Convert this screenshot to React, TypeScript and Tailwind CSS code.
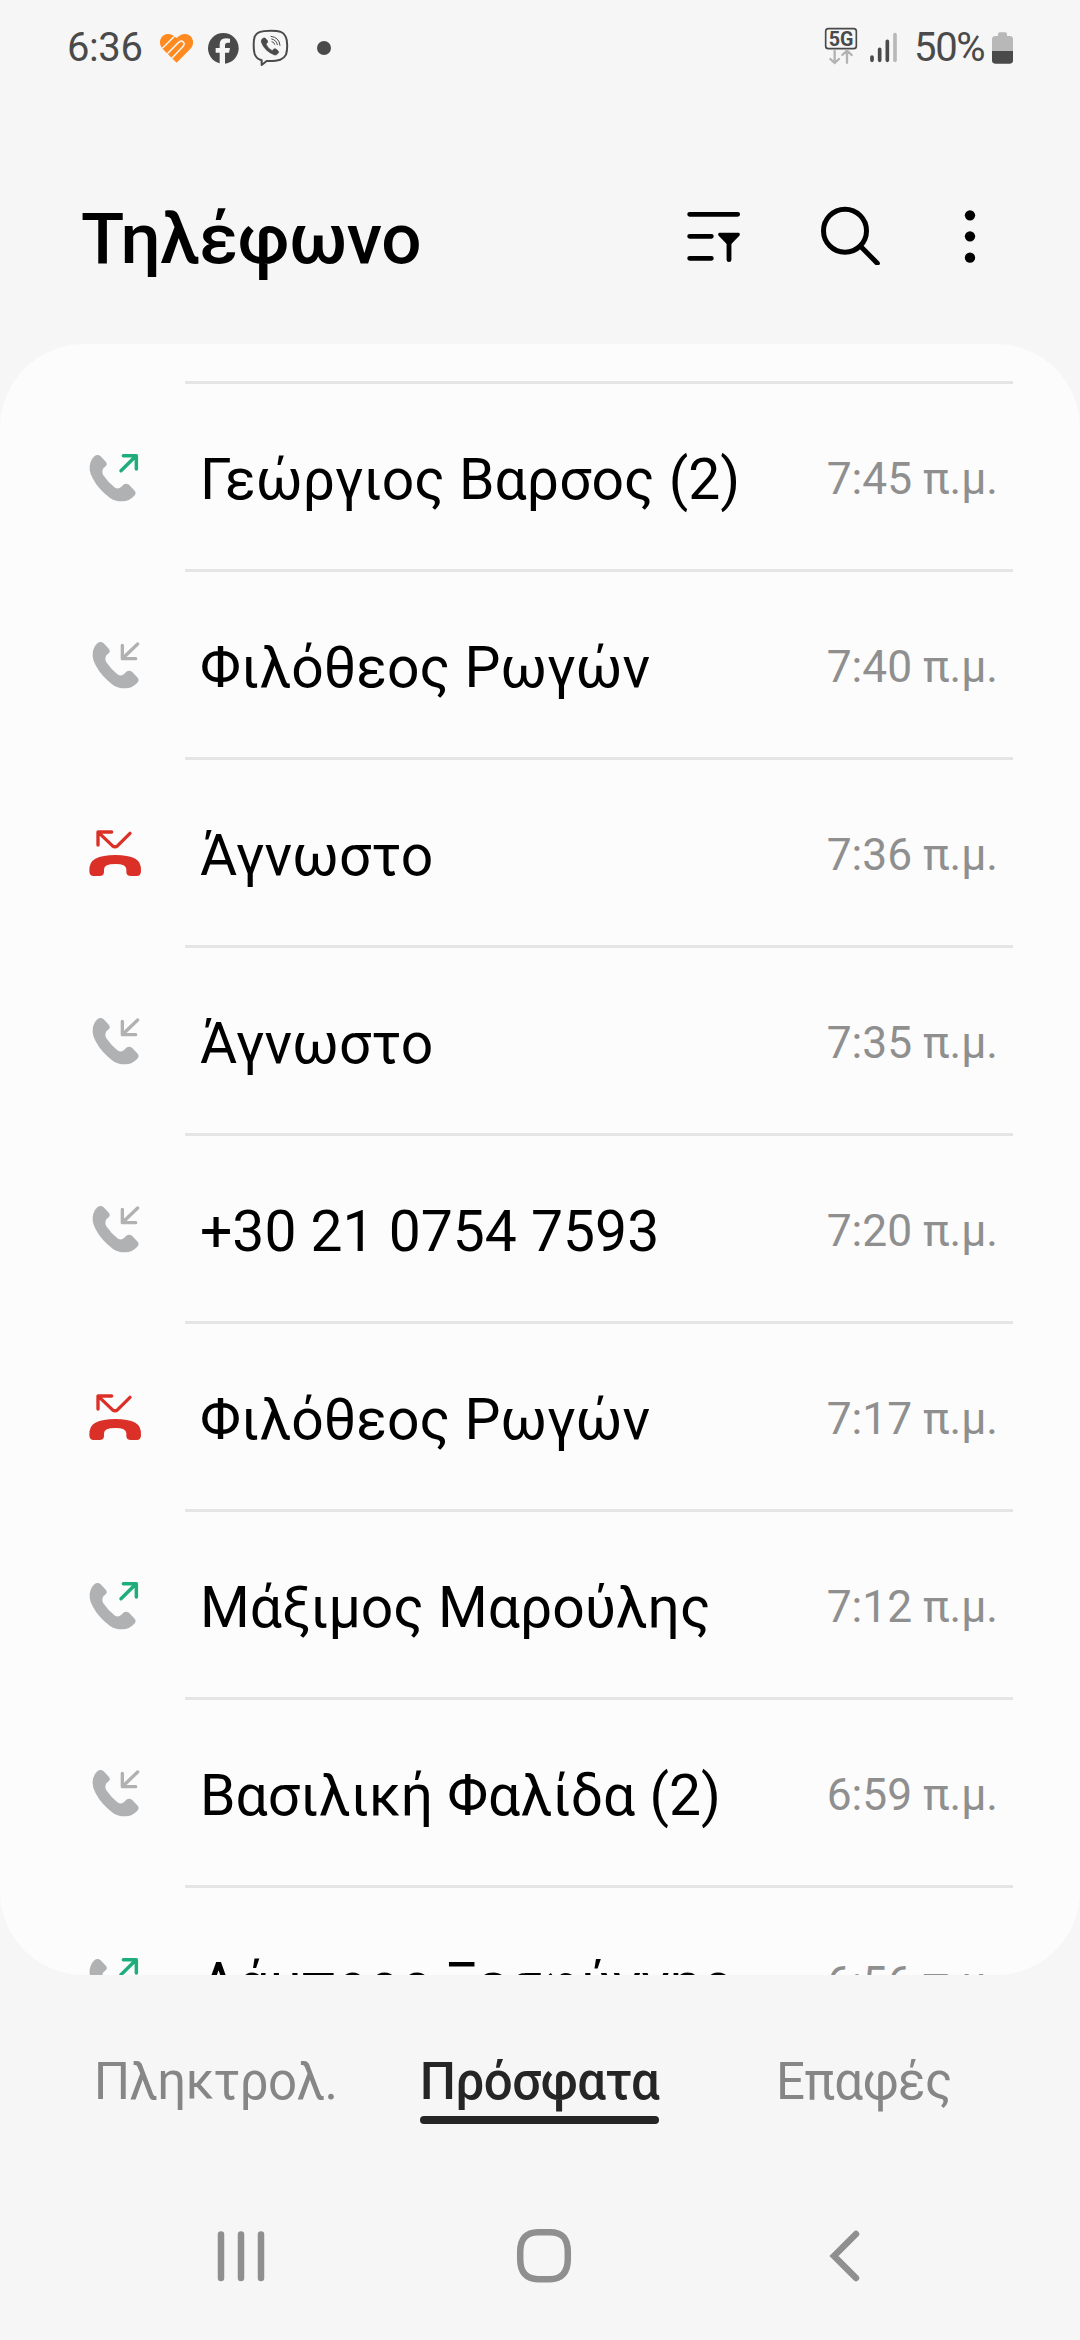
import React, { useState } from 'react';

type CallType = 'outgoing' | 'incoming' | 'missed';

interface CallEntry {
  id: number;
  type: CallType;
  name: string;
  time: string;
}

const calls: CallEntry[] = [
  { id: 1, type: 'outgoing', name: 'Γεώργιος Βαρσος (2)', time: '7:45 π.μ.' },
  { id: 2, type: 'incoming', name: 'Φιλόθεος Ρωγών', time: '7:40 π.μ.' },
  { id: 3, type: 'missed', name: 'Άγνωστο', time: '7:36 π.μ.' },
  { id: 4, type: 'incoming', name: 'Άγνωστο', time: '7:35 π.μ.' },
  { id: 5, type: 'incoming', name: '+30 21 0754 7593', time: '7:20 π.μ.' },
  { id: 6, type: 'missed', name: 'Φιλόθεος Ρωγών', time: '7:17 π.μ.' },
  { id: 7, type: 'outgoing', name: 'Μάξιμος Μαρούλης', time: '7:12 π.μ.' },
  { id: 8, type: 'incoming', name: 'Βασιλική Φαλίδα (2)', time: '6:59 π.μ.' },
  { id: 9, type: 'outgoing', name: 'Λάμπρος Ξεσφύγγης', time: '6:56 π.μ.' },
];

const HANDSET =
  'M103 109 Q113 101 122 109 L138 126 Q143 132 138 138 L130 145 Q124 155 130 166 Q143 186 165 203 Q176 209 184 200 L190 194 Q198 189 207 194 L224 212 Q230 219 223 227 Q207 244 188 244 Q166 245 150 234 Q115 208 98 175 Q84 150 91 128 Q95 116 103 109Z';

const CallIcon: React.FC<{ type: CallType }> = ({ type }) => {
  if (type === 'missed') {
    return (
      <svg viewBox="72 66 180 183" className="h-[61px] w-[60px]" fill="none">
        <path
          d="M155 96 H114 V135 M116 98 L157 137 Q165 144 173 137 L210 100"
          stroke="#db3028"
          strokeWidth="10"
          strokeLinecap="round"
          strokeLinejoin="round"
        />
        <path
          d="M88 213 Q87 185 106 176 Q128 165 166 165 Q204 165 226 176 Q244 185 243 213 Q243 228 230 228 H213 Q199 228 199 216 V208 Q199 192 166 192 Q132 192 132 208 V216 Q132 228 118 228 H101 Q88 228 88 213Z"
          fill="#db3028"
        />
      </svg>
    );
  }

  if (type === 'incoming') {
    return (
      <svg viewBox="72 72 180 183" className="h-[61px] w-[60px]" fill="none">
        <path d={HANDSET} transform="translate(9 -9)" fill="#b0b1b3" />
        <path
          d="M187 106 V146 H227 M189 144 L233 102"
          stroke="#b0b1b3"
          strokeWidth="10"
          strokeLinecap="round"
          strokeLinejoin="round"
        />
      </svg>
    );
  }

  return (
    <svg viewBox="72 78 180 183" className="h-[61px] w-[60px]" fill="none">
      <path d={HANDSET} fill="#b0b1b3" />
      <path
        d="M190 107 H229 V147 M183 152 L227 109"
        stroke="#1fae7b"
        strokeWidth="10.5"
        strokeLinecap="round"
        strokeLinejoin="round"
      />
    </svg>
  );
};

const StatusBar: React.FC = () => (
  <div className="flex h-[94px] items-center justify-between pr-[66px] pl-[67px] text-[#4a4a4a]">
    <div className="flex items-center">
      <span className="w-[91px] pt-0.5 text-[40px] leading-none tracking-[-0.4px]">6:36</span>
      <svg viewBox="324 51 108 120" className="h-10 w-9">
        <clipPath id="heart">
          <path d="M380 158 L338 117 C326 104 328 86 339 77 C351 69 366 71 380 84 C394 70 410 69 422 79 C432 91 432 106 420 118Z" />
        </clipPath>
        <g clipPath="url(#heart)">
          <rect x="324" y="60" width="108" height="110" fill="#ff8a1f" />
          <path d="M334 118 L375 77" stroke="#f6f6f6" strokeWidth="4.5" />
          <path d="M349 134 L385 98 Q394 90 400 96 Q406 102 397 112 L364 146" stroke="#f6f6f6" strokeWidth="4.5" fill="none" />
        </g>
      </svg>
      <svg viewBox="471 51 99 120" className="ml-[13px] h-10 w-[33px]">
        <circle cx="520" cy="115" r="46" fill="#4a4a4a" />
        <path
          d="M509 162 V128 H497 V114 H509 V104 Q509 85 528 85 Q535 85 540 86 V98 H533 Q525 98 525 106 V114 H540 L537 128 H525 V162Z"
          fill="#f6f6f6"
        />
      </svg>
      <svg viewBox="606 51 114 120" className="ml-3 h-10 w-[38px]" fill="none" stroke="#4a4a4a">
        <path
          d="M662 62 C630 62 620 68 614 80 C610 92 610 120 614 132 C618 143 624 148 635 151 V165 L650 153 C688 154 701 148 708 134 C713 118 713 92 707 80 C700 66 690 62 662 62Z"
          strokeWidth="6"
          strokeLinejoin="round"
        />
        <path
          d="M641 84 Q632 88 634 96 Q643 123 674 135 Q681 137 686 127 Q687 123 676 116 Q671 115 667 122 Q653 116 648 102 L653 97 Q655 93 645 84Z"
          fill="#4a4a4a"
          strokeWidth="2"
        />
        <path d="M663 79 Q688 82 690 106 M665 87 Q680 90 682 104 M666 95 Q673 96 674 103" strokeWidth="3" strokeLinecap="round" />
      </svg>
      <svg viewBox="792 51 60 120" className="ml-6 h-10 w-5">
        <circle cx="822" cy="114" r="21" fill="#4a4a4a" />
      </svg>
    </div>

    <div className="flex items-center">
      <svg viewBox="72 51 102 120" className="h-10 w-[34px]" fill="none">
        <rect x="77" y="56" width="92" height="60" rx="8" stroke="#4a4a4a" strokeWidth="5" />
        <text x="123" y="107" textAnchor="middle" fontFamily="Roboto, sans-serif" fontWeight="700" fontSize="59" fill="#4a4a4a">
          5G
        </text>
        <path
          d="M104 123 V158 M91 147 L104 159 L117 147 M141 158 V124 M127 135 L141 122 L155 135"
          stroke="#b3b3b3"
          strokeWidth="7"
          strokeLinecap="round"
        />
      </svg>
      <svg viewBox="204 51 90 120" className="ml-2.5 h-10 w-[30px]" strokeWidth="11" strokeLinecap="round" stroke="#4a4a4a">
        <path d="M216 141 V151 M239 118 V151 M262 94 V151" />
        <path d="M285 74 V151" stroke="#b8b8b8" />
      </svg>
      <span className="ml-4 w-[77px] pt-0.5 text-[40px] leading-none tracking-[-1.3px]">50%</span>
      <svg viewBox="573 51 69 120" className="h-10 w-[23px]">
        <path d="M594 73 Q594 67 600 67 H615 Q621 67 621 73 V78 H630 Q639 79 639 88 V123 H576 V88 Q576 79 585 78 H594Z" fill="#b8b8b8" />
        <path d="M576 123 H639 V151 Q639 161 630 161 H585 Q576 161 576 151Z" fill="#4a4a4a" />
      </svg>
    </div>
  </div>
);

const Header: React.FC = () => (
  <header className="flex h-[250px] items-start justify-between pt-[107px] pr-[103px] pl-[81px]">
    <h1 className="text-[71px] leading-[76px] font-medium tracking-[-0.3px] text-black">Τηλέφωνο</h1>
    <div className="flex items-center pt-1">
      <button type="button" aria-label="Φίλτρο">
        <svg viewBox="78 75 165 180" className="h-[60px] w-[55px]">
          <path d="M89 103 H233 M89 169 H154 M89 235 H154 M207 180 V239" stroke="#000" strokeWidth="14.5" strokeLinecap="round" />
          <path d="M178 158 H236 Q242 161 238 167 L214 192 H200 L176 167 Q172 161 178 158Z" />
        </svg>
      </button>
      <button type="button" aria-label="Αναζήτηση" className="ml-[78px]">
        <svg viewBox="477 75 186 180" className="h-[60px] w-[62px]" fill="none" stroke="#000" strokeWidth="15" strokeLinecap="round">
          <circle cx="555" cy="152" r="64.5" />
          <path d="M603 200 L652 250" />
        </svg>
      </button>
      <button type="button" aria-label="Περισσότερα" className="ml-[82px]">
        <svg viewBox="909 75 42 180" className="h-[60px] w-3.5">
          <circle cx="930" cy="106" r="15.5" />
          <circle cx="930" cy="169" r="15.5" />
          <circle cx="930" cy="233" r="15.5" />
        </svg>
      </button>
    </div>
  </header>
);

const CallRow: React.FC<{ call: CallEntry }> = ({ call }) => (
  <li className="flex h-[188px] shrink-0 pl-[84px]">
    <div className="flex w-[101px] items-center pb-[3px]">
      <CallIcon type={call.type} />
    </div>
    <div className="flex w-[828px] items-center justify-between border-b-[3px] border-[#e5e5e5] pr-[15px] pl-[15px]">
      <span className="pt-1.5 text-[57px] leading-[68px] whitespace-nowrap text-black">{call.name}</span>
      <span className="pt-[5px] text-[44.3px] leading-[52px] whitespace-nowrap text-[#8f8f8f]">{call.time}</span>
    </div>
  </li>
);

const tabs = [
  { id: 'keypad', label: 'Πληκτρολ.', box: 'w-[243px]' },
  { id: 'recents', label: 'Πρόσφατα', box: 'w-[239px] ml-[83px]' },
  { id: 'contacts', label: 'Επαφές', box: 'w-[176px] ml-[117px]' },
];

const App: React.FC = () => {
  const [activeTab, setActiveTab] = useState('recents');

  return (
    <div className="flex h-[2340px] w-[1080px] flex-col overflow-hidden bg-[#f6f6f6] font-[Roboto,'Noto_Sans',sans-serif]">
      <StatusBar />
      <Header />

      {/* Λίστα κλήσεων */}
      <main className="h-[1631px] overflow-hidden rounded-[84px] bg-[#fcfcfc]">
        <div className="mr-[67px] ml-[185px] h-10 border-b-[3px] border-[#e5e5e5]" />
        <ul className="flex flex-col">
          {calls.map((call) => (
            <CallRow key={call.id} call={call} />
          ))}
        </ul>
      </main>

      {/* Καρτέλες */}
      <nav className="flex h-[207px] items-start pt-[73px] pl-[94px] text-[51px] leading-[68px] tracking-[-0.5px]">
        {tabs.map((tab) => (
          <button
            key={tab.id}
            type="button"
            onClick={() => setActiveTab(tab.id)}
            className={`flex flex-col items-center ${tab.box} ${
              tab.id === activeTab ? 'font-medium text-[#252525]' : 'text-[#868686]'
            }`}
          >
            <span className="whitespace-nowrap">{tab.label}</span>
            {tab.id === activeTab && <span className="h-2 w-full rounded-full bg-[#252525]" />}
          </button>
        ))}
      </nav>

      {/* Μπάρα πλοήγησης συστήματος */}
      <footer className="flex items-center justify-between pt-[43px] pr-[217px] pl-[214px]">
        <svg viewBox="0 0 54 60" className="h-[60px] w-[54px]" stroke="#8f8f8f" strokeWidth="6.5" strokeLinecap="round">
          <path d="M7 9.5 V53 M27 9.5 V53 M47 9.5 V53" />
        </svg>
        <svg viewBox="0 0 60 60" className="mr-[7px] h-[60px] w-[60px]" fill="none" stroke="#8f8f8f" strokeWidth="6.5">
          <path d="M30 7.2 H36 C49 7.2 53.8 14 53.8 27 V34 C53.8 47 48 54.2 36 54.2 H24 C12 54.2 6.2 47 6.2 34 V27 C6.2 14 12 7.2 24 7.2Z" />
        </svg>
        <svg viewBox="0 0 36 60" className="h-[60px] w-9" fill="none" stroke="#8f8f8f" strokeWidth="6.5" strokeLinecap="round">
          <path d="M29 9 L7 31 L29 53" />
        </svg>
      </footer>
    </div>
  );
};

export default App;
